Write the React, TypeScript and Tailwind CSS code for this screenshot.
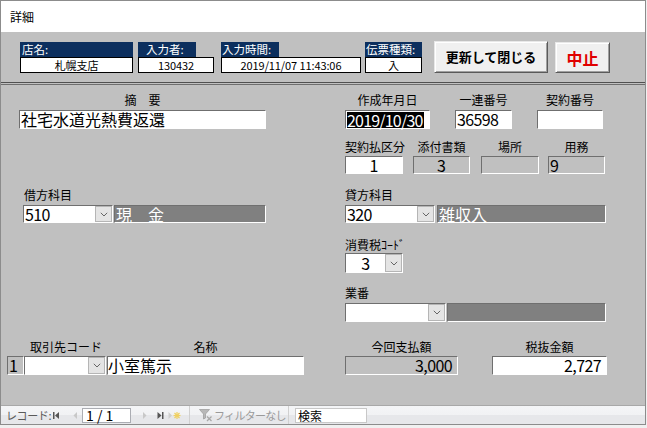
import React from "react";

const sunken =
  "border border-t-[#6f6f6f] border-l-[#6f6f6f] border-r-white border-b-white";

function Chevron() {
  return (
    <svg width="8" height="5" viewBox="0 0 8 5">
      <path d="M0.8 0.8 L4 4 L7.2 0.8" stroke="#666" fill="none" strokeWidth="1" />
    </svg>
  );
}

function Combo({
  w,
  h,
  value,
  center,
}: {
  w: number;
  h: number;
  value?: string;
  center?: boolean;
}) {
  return (
    <div
      className={`flex bg-white ${sunken} shrink-0`}
      style={{ width: w, height: h }}
    >
      <div
        className={`flex-1 flex items-center text-[16px] leading-none text-black tracking-[-0.6px] ${
          center ? "justify-center" : "pl-[1px]"
        }`}
      >
        {value}
      </div>
      <div className="w-[17px] h-full bg-[#e4e4e4] border border-[#b5b5b5] flex items-center justify-center">
        <Chevron />
      </div>
    </div>
  );
}

function Label({ children, className = "" }: { children: React.ReactNode; className?: string }) {
  return (
    <div className={`h-[14px] leading-[14px] text-[12px] text-black whitespace-nowrap ${className}`}>
      {children}
    </div>
  );
}

function HeaderField({
  label,
  value,
  w,
  lw,
  ml,
  lpl = 2,
}: {
  label: string;
  value: string;
  w: number;
  lw?: number;
  ml: number;
  lpl?: number;
}) {
  return (
    <div className="flex flex-col shrink-0" style={{ width: w, marginLeft: ml }}>
      <div
        className="h-[15px] bg-[#0c2f5e] text-white text-[11.5px] flex items-center leading-none whitespace-nowrap"
        style={{ width: lw ?? w, paddingLeft: lpl }}
      >
        {label}
      </div>
      <div className="h-[16px] bg-white border border-black text-[11px] flex items-center justify-center leading-none text-black tracking-[-0.1px] whitespace-nowrap">
        {value}
      </div>
    </div>
  );
}

function NavFirst() {
  const c = "#555";
  return (
    <svg width="7" height="7" viewBox="0 0 7 7">
      <rect x="0" y="0" width="1.5" height="7" fill={c} />
      <path d="M6 0 L2 3.5 L6 7 Z" fill={c} />
    </svg>
  );
}
function NavPrev() {
  const c = "#c8c8c8";
  return (
    <svg width="5" height="7" viewBox="0 0 5 7">
      <path d="M4 0 L0.5 3.5 L4 7 Z" fill={c} />
    </svg>
  );
}
function NavNext() {
  const c = "#c8c8c8";
  return (
    <svg width="5" height="7" viewBox="0 0 5 7">
      <path d="M1 0 L4.5 3.5 L1 7 Z" fill={c} />
    </svg>
  );
}
function NavLast() {
  const c = "#555";
  return (
    <svg width="7" height="7" viewBox="0 0 7 7">
      <path d="M0.5 0 L4.5 3.5 L0.5 7 Z" fill={c} />
      <rect x="5" y="0" width="1.5" height="7" fill={c} />
    </svg>
  );
}
function NavNew() {
  return (
    <svg width="13" height="9" viewBox="0 0 13 9">
      <path d="M0.5 1 L4 4.5 L0.5 8 Z" fill="#cfcfcf" />
      <g stroke="#f0d060" strokeWidth="1.2">
        <line x1="9" y1="1" x2="9" y2="8" />
        <line x1="5.5" y1="4.5" x2="12.5" y2="4.5" />
        <line x1="6.5" y1="2" x2="11.5" y2="7" />
        <line x1="11.5" y1="2" x2="6.5" y2="7" />
      </g>
    </svg>
  );
}
function FilterIcon() {
  return (
    <svg width="14" height="13" viewBox="0 0 14 13">
      <path d="M0.5 0.5 H10.5 L6.5 5 V9 L4.5 10 V5 Z" fill="#b8b8b8" stroke="#a0a0a0" strokeWidth="0.8" />
      <path d="M8 7.5 L12.5 12 M12.5 7.5 L8 12" stroke="#a8a8a8" strokeWidth="1.3" />
    </svg>
  );
}

export default function App() {
  return (
    <div className="w-[647px] h-[428px] bg-[#f0f0f0] font-['Noto_Sans_CJK_JP',sans-serif] overflow-hidden">
      <div className="w-[646px] h-[425px] border border-[#8c8c8c] flex flex-col">
        {/* Title bar */}
        <div className="h-[31px] bg-white flex items-center pl-[9px] text-[12px] text-black shrink-0">
          詳細
        </div>

        {/* Header band */}
        <div className="h-[51px] bg-[#c0c0c0] border-b border-[#505050] flex items-start pt-[10px] shrink-0">
          <HeaderField label="店名:" value="札幌支店" w={113} ml={19} />
          <HeaderField label="入力者:" value="130432" w={76} lw={58} ml={5} lpl={8} />
          <HeaderField label="入力時間:" value="2019/11/07 11:43:06" w={140} lw={58} ml={7} lpl={1} />
          <HeaderField label="伝票種類:" value="入" w={57} ml={4} lpl={1} />
          <button className="ml-[12px] mt-[-1px] w-[114px] h-[32px] bg-[#f0f0f0] border border-t-[#e8e8e8] border-l-[#e8e8e8] border-r-[#5a5a5a] border-b-[#5a5a5a] shadow-[inset_1px_1px_0_#ffffff,inset_-1px_-1px_0_#a0a0a0] text-[13px] font-bold text-black">
            更新して閉じる
          </button>
          <button className="ml-[7px] mt-[0px] w-[55px] h-[31px] bg-[#f0f0f0] border border-t-[#e8e8e8] border-l-[#e8e8e8] border-r-[#5a5a5a] border-b-[#5a5a5a] shadow-[inset_1px_1px_0_#ffffff,inset_-1px_-1px_0_#a0a0a0] text-[16px] font-bold text-[#e00000]">
            中止
          </button>
        </div>
        <div className="h-[1px] bg-[#c0c0c0] shrink-0" />

        {/* Body */}
        <div className="h-[321px] bg-[#c0c0c0] border-t border-[#6e6e6e] flex shrink-0">
          {/* Left column */}
          <div className="w-[344px] shrink-0 flex flex-col">
            <div className="mt-[8px] ml-[18px] w-[247px] flex flex-col">
              <Label className="text-center">摘　要</Label>
              <div className={`mt-[3px] h-[19px] bg-white ${sunken} text-[16px] leading-[17px] text-black pl-[1px] whitespace-nowrap`}>
                社宅水道光熱費返還
              </div>
            </div>

            <div className="mt-[59px] ml-[22px] flex flex-col">
              <Label className="pl-[1px]">借方科目</Label>
              <div className="mt-[3px] flex h-[18px]">
                <Combo w={90} h={18} value="510" />
                <div className={`ml-[1px] w-[152px] h-[18px] bg-[#808080] ${sunken} text-white text-[16px] leading-[16px] pl-[1px] whitespace-nowrap`}>
                  現　金
                </div>
              </div>
            </div>

            <div className="mt-[117px] ml-[6px] flex flex-col">
              <div className="flex h-[14px]">
                <Label className="ml-[23px] w-[77px]">取引先コード</Label>
                <Label className="w-[197px] text-center">名称</Label>
              </div>
              <div className="mt-[2px] flex h-[19px]">
                <div className={`w-[17px] h-[19px] bg-[#c0c0c0] ${sunken} text-[16px] leading-[17px] text-black pl-[1px]`}>
                  1
                </div>
                <Combo w={82} h={19} />
                <div className={`ml-[1px] w-[197px] h-[19px] bg-white ${sunken} text-[16px] leading-[17px] text-black whitespace-nowrap`}>
                  小室篤示
                </div>
              </div>
            </div>
          </div>

          {/* Right column */}
          <div className="flex flex-col">
            {/* Row A */}
            <div className="mt-[8px] flex">
              <div className="w-[85px] flex flex-col">
                <Label className="text-center">作成年月日</Label>
                <div className={`mt-[3px] h-[19px] bg-white ${sunken} pl-[1px] flex items-center`}>
                  <span className="bg-black text-white text-[16px] leading-[16px] tracking-[-0.8px] pr-[1px]">
                    2019/10/30
                  </span>
                </div>
              </div>
              <div className="ml-[25px] w-[57px] flex flex-col">
                <Label className="text-center">一連番号</Label>
                <div className={`mt-[3px] h-[19px] bg-white ${sunken} text-[16px] leading-[17px] text-black pl-[1px] tracking-[-0.6px]`}>
                  36598
                </div>
              </div>
              <div className="ml-[25px] w-[66px] flex flex-col">
                <Label className="text-center">契約番号</Label>
                <div className={`mt-[3px] h-[19px] bg-white ${sunken}`} />
              </div>
            </div>

            {/* Row B */}
            <div className="mt-[11px] flex">
              <div className="w-[58px] flex flex-col">
                <Label className="text-center">契約払区分</Label>
                <div className={`mt-[2px] h-[18px] bg-white ${sunken} text-[16px] leading-[16px] text-black text-center`}>
                  1
                </div>
              </div>
              <div className="ml-[10px] w-[57px] flex flex-col">
                <Label className="text-center">添付書類</Label>
                <div className={`mt-[2px] h-[18px] bg-[#c0c0c0] ${sunken} text-[16px] leading-[16px] text-black text-center`}>
                  3
                </div>
              </div>
              <div className="ml-[11px] w-[58px] flex flex-col">
                <Label className="text-center">場所</Label>
                <div className={`mt-[2px] h-[18px] bg-[#c0c0c0] ${sunken}`} />
              </div>
              <div className="ml-[9px] w-[57px] flex flex-col">
                <Label className="text-center">用務</Label>
                <div className={`mt-[2px] h-[18px] bg-[#c0c0c0] ${sunken} text-[16px] leading-[16px] text-black pl-[1px]`}>
                  9
                </div>
              </div>
            </div>

            {/* Row C */}
            <div className="mt-[14px] flex flex-col">
              <Label>貸方科目</Label>
              <div className="mt-[3px] flex h-[18px]">
                <Combo w={90} h={18} value="320" />
                <div className={`ml-[2px] w-[169px] h-[18px] bg-[#808080] ${sunken} text-white text-[16px] leading-[16px] pl-[1px] whitespace-nowrap`}>
                  雑収入
                </div>
              </div>
            </div>

            {/* Row D */}
            <div className="mt-[15px] flex flex-col">
              <Label>消費税ｺｰﾄﾞ</Label>
              <div className="mt-[1px] flex">
                <Combo w={58} h={20} value="3" center />
              </div>
            </div>

            {/* Row E */}
            <div className="mt-[13px] flex flex-col">
              <Label>業番</Label>
              <div className="mt-[3px] flex h-[19px]">
                <Combo w={101} h={19} />
                <div className={`ml-[1px] w-[159px] h-[19px] bg-[#808080] ${sunken}`} />
              </div>
            </div>

            {/* Row F */}
            <div className="mt-[18px] flex">
              <div className="w-[113px] flex flex-col">
                <Label className="text-center">今回支払額</Label>
                <div className={`mt-[2px] h-[19px] bg-[#c0c0c0] ${sunken} text-[16px] leading-[17px] text-black text-right pr-[5px] tracking-[-0.6px]`}>
                  3,000
                </div>
              </div>
              <div className="ml-[34px] w-[115px] flex flex-col">
                <Label className="text-center">税抜金額</Label>
                <div className={`mt-[2px] h-[19px] bg-white ${sunken} text-[16px] leading-[17px] text-black text-right pr-[5px] tracking-[-0.6px]`}>
                  2,727
                </div>
              </div>
            </div>
          </div>
        </div>

        {/* Status bar */}
        <div className="h-[19px] border-t border-[#a8a8a8] bg-[linear-gradient(#f4f5f7_0%,#f1f2f4_50%,#e6e7ea_51%,#e6e7ea_100%)] flex items-center shrink-0">
          <span className="ml-[5px] w-[45px] shrink-0 text-[11px] tracking-[-0.4px] text-[#5a5a5a] whitespace-nowrap leading-none">レコード:</span>
          <span className="ml-[2px] flex shrink-0"><NavFirst /></span>
          <span className="ml-[13px] flex shrink-0"><NavPrev /></span>
          <div className="ml-[4px] w-[49px] h-[15px] shrink-0 bg-white border border-[#abadb3] text-[14px] leading-[13px] text-black pl-[3px] whitespace-nowrap">
            1 / 1
          </div>
          <span className="ml-[11px] flex shrink-0"><NavNext /></span>
          <span className="ml-[10px] flex shrink-0"><NavLast /></span>
          <span className="ml-[4px] flex shrink-0"><NavNew /></span>
          <div className="ml-[8px] w-[1px] h-[18px] shrink-0 bg-[#d0d0d0]" />
          <span className="ml-[9px] flex shrink-0"><FilterIcon /></span>
          <span className="ml-[1px] w-[70px] shrink-0 text-[11px] tracking-[-0.7px] text-[#9a9a9a] whitespace-nowrap leading-none">フィルターなし</span>
          <div className="ml-[4px] w-[1px] h-[18px] shrink-0 bg-[#d0d0d0]" />
          <div className="ml-[6px] w-[72px] h-[15px] shrink-0 bg-white border border-[#c8c8c8] text-[12px] leading-[13px] text-black pl-[2px]">
            検索
          </div>
        </div>
      </div>
    </div>
  );
}
